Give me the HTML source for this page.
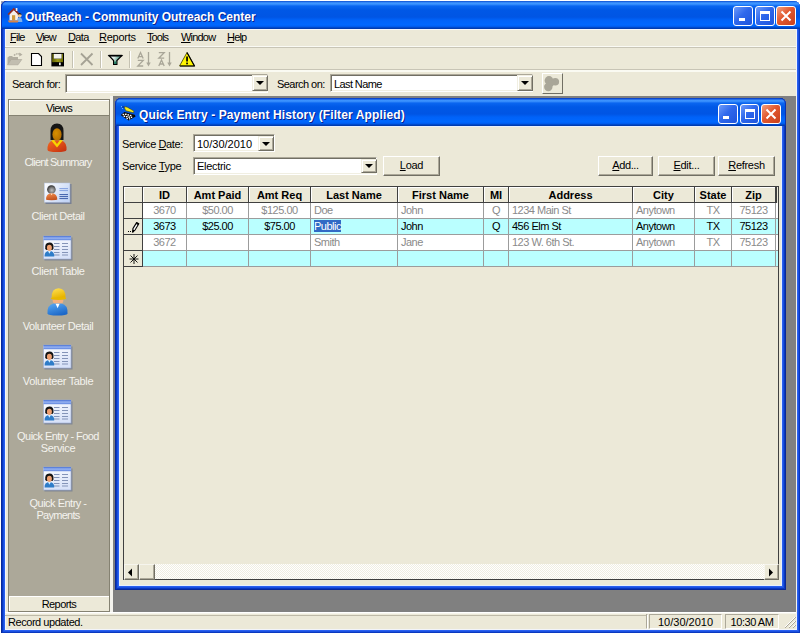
<!DOCTYPE html><html><head><meta charset="utf-8"><style>
*{margin:0;padding:0;box-sizing:border-box}
html,body{width:800px;height:633px;overflow:hidden;background:#fff;font-family:"Liberation Sans",sans-serif;font-size:11px;color:#000}
.a{position:absolute;white-space:nowrap}
.tbar{background:linear-gradient(#0846C8 0,#2A7AF0 1px,#3D95FF 2px,#3D95FF 3px,#0A66F0 5px,#0058E6 9px,#0055E4 16px,#0062F8 19px,#0068FF 24px,#0058E8 26px,#003CB0 27px,#003CB0 28px)}
.tbar2{background:linear-gradient(#0A3CC0 0,#0F50D8 1px,#3A8EFC 2px,#3D95FF 3px,#2A80F8 4px,#0A66F0 5px,#0058E6 9px,#0055E4 16px,#0062F8 19px,#0068FF 24px,#0058E8 26px,#003CB0 27px,#003CB0 28px)}
.ttl{color:#fff;font-weight:bold;font-size:12px;text-shadow:1px 1px 0 #0A1E8C}
.cbtn{border:1px solid #fff;border-radius:3px;background:linear-gradient(135deg,#6D9BFA,#2F68EC 45%,#1F55DC)}
.xbtn{background:linear-gradient(135deg,#F2A07F,#E2582F 45%,#C9401C)}
.u{text-decoration:underline}
.sunk{background:#fff;border-top:1px solid #ACA899;border-left:1px solid #ACA899;border-right:1px solid #fff;border-bottom:1px solid #fff;box-shadow:inset 1px 1px 0 #716F64, inset -1px -1px 0 #F1EFE2}
.ddb{background:#ECE9D8;border-top:1px solid #F1EFE2;border-left:1px solid #F1EFE2;border-right:1px solid #716F64;border-bottom:1px solid #716F64;box-shadow:inset 1px 1px 0 #fff, inset -1px -1px 0 #ACA899}
.ddb:after{content:"";position:absolute;left:50%;top:50%;margin-left:-4px;margin-top:-2px;border-left:4px solid transparent;border-right:4px solid transparent;border-top:4px solid #000}
.btn{background:#ECE9D8;border-top:1px solid #fff;border-left:1px solid #fff;border-right:1px solid #716F64;border-bottom:1px solid #716F64;box-shadow:inset -1px -1px 0 #ACA899;text-align:center}
.sbtn{background:#ECE9D8;border-top:1px solid #F6F5EE;border-left:1px solid #F6F5EE;border-right:1px solid #716F64;border-bottom:1px solid #716F64;box-shadow:inset -1px -1px 0 #ACA899}
.pbtn{background:#ECE9D8;border-bottom:1px solid #858272;box-shadow:inset 1px 1px 0 #fff;text-align:center}
.pbtn2{background:#ECE9D8;box-shadow:inset 1px 1px 0 #fff;text-align:center}
.vlab{color:#F4F3EE;text-align:center;line-height:12px}
.hc{background:#ECE9D8;border-right:1px solid #404040;border-bottom:1px solid #404040;box-shadow:inset 1px 1px 0 #fff;font-weight:bold;text-align:center;line-height:17px}
.dc{border-right:1px solid #9C9C9C;border-bottom:1px solid #9C9C9C;line-height:15px;overflow:hidden;padding-left:3px}
.rh{background:#ECE9D8;border-right:1px solid #404040;border-bottom:1px solid #404040}
.g{color:#8A8A8A}
.spanel{border-top:1px solid #ACA899;border-left:1px solid #ACA899;border-right:1px solid #fff;border-bottom:1px solid #fff;line-height:14px;text-align:center}
</style></head><body>
<div class="a" style="left:0;top:0;width:800px;height:633px;background:#fff"></div>
<div class="a" style="left:1px;top:1px;width:5px;height:5px;background:#A4A8B8"></div>
<div class="a" style="left:1px;top:1px;width:799px;height:632px;background:#2A60F0;border-radius:6px 6px 0 0;box-shadow:inset 1px 0 0 #08289A, inset -1px -1px 0 #0A38C0, inset 2px 0 0 #0A38C0, inset -2px -2px 0 #1A50E0, inset 3px 0 0 #1A50E0"></div>
<div class="a tbar" style="left:1px;top:1px;width:799px;height:28px;border-radius:6px 6px 0 0;box-shadow:inset 1px 0 0 #0A30B0"></div>
<svg class="a" style="left:7px;top:7px" width="16" height="16" viewBox="0 0 16 16">
<path d="M2.5 7 L2.5 13.5 L11 13.5 L11 7 L6.8 3Z" fill="#F6F0EA"/>
<path d="M1.2 7.6 L6.8 2 L12.2 7.4" fill="none" stroke="#9C2C1A" stroke-width="1.6"/>
<rect x="8.8" y="1" width="1.6" height="3" fill="#F0F0F0"/>
<rect x="5" y="8.2" width="3.2" height="5.3" fill="#D09A3A"/>
<path d="M9.8 15 Q10 10.6 12.6 10.6 Q15.2 10.6 15.4 15Z" fill="#7EB0EC"/>
<circle cx="12.6" cy="8.6" r="2" fill="#EEC694"/>
<path d="M10.6 8 Q11 6 12.6 6 Q14.4 6 14.6 8 Q13.6 7.2 12.6 7.2 Q11.6 7.2 10.6 8Z" fill="#1A1410"/>
<path d="M0.8 13.4 L11.5 13.4 L10.8 15.4 L2 15.4Z" fill="#D8844A"/>
</svg>
<div class="a ttl" style="left:25px;top:10px;letter-spacing:0px">OutReach - Community Outreach Center</div>
<div class="a cbtn" style="left:733px;top:6px;width:20px;height:20px"><div class="a" style="left:5px;top:11px;width:6px;height:3px;background:#fff"></div></div>
<div class="a cbtn" style="left:755px;top:6px;width:20px;height:20px"><div class="a" style="left:4px;top:4px;width:10px;height:10px;border:1px solid #fff;border-top-width:3px"></div></div>
<div class="a cbtn xbtn" style="left:776px;top:6px;width:20px;height:20px"><svg class="a" style="left:3px;top:3px" width="12" height="12"><path d="M1.5 1.5L10.5 10.5M10.5 1.5L1.5 10.5" stroke="#fff" stroke-width="2"/></svg></div>
<div class="a" style="left:5px;top:29px;width:792px;height:601px;background:#ECE9D8;border:1px solid #F2F4FA;border-top-color:#F6F8FC"></div>
<div class="a" style="left:10px;top:31px;line-height:13px;letter-spacing:-0.75px"><span class="u">F</span>ile</div>
<div class="a" style="left:36px;top:31px;line-height:13px;letter-spacing:-1.0px"><span class="u">V</span>iew</div>
<div class="a" style="left:68px;top:31px;line-height:13px;letter-spacing:-0.65px"><span class="u">D</span>ata</div>
<div class="a" style="left:99px;top:31px;line-height:13px;letter-spacing:-0.25px"><span class="u">R</span>eports</div>
<div class="a" style="left:147px;top:31px;line-height:13px;letter-spacing:-0.9px"><span class="u">T</span>ools</div>
<div class="a" style="left:181px;top:31px;line-height:13px;letter-spacing:-0.8px"><span class="u">W</span>indow</div>
<div class="a" style="left:227px;top:31px;line-height:13px;letter-spacing:-0.8px"><span class="u">H</span>elp</div>
<div class="a" style="left:5px;top:46px;width:791px;height:1px;background:#FAFAF4"></div>
<div class="a" style="left:5px;top:47px;width:791px;height:1px;background:#C8C5B6"></div>
<svg class="a" style="left:5px;top:48px" width="200" height="22" viewBox="0 0 200 22">
<!-- open folder disabled -->
<path d="M2.5 16.5 L2.5 9.5 L4.5 8 L7 8 L8 9 L13 9 L13 12 Z" fill="#B2AEA0"/>
<path d="M2.5 16.8 L6.2 11.5 L16.8 11.5 L13 16.8Z" fill="#C2BEB0" stroke="#A9A597" stroke-width="0.6"/>
<path d="M9 7.5 Q12 4.5 15.5 6.5" fill="none" stroke="#B2AEA0" stroke-width="1.4" stroke-dasharray="1.6 0.8"/>
<path d="M14.5 4.5 L17.5 6.8 L14.2 8.6Z" fill="#B2AEA0"/>
<!-- new doc -->
<path d="M26.5 5.5 L33.5 5.5 L36.5 8.5 L36.5 17.5 L26.5 17.5 Z" fill="#fff" stroke="#000" stroke-width="1.1"/>
<!-- save -->
<defs><linearGradient id="olv" x1="0" y1="0" x2="1" y2="0"><stop offset="0" stop-color="#5E5E00"/><stop offset="0.5" stop-color="#9A9A1A"/><stop offset="1" stop-color="#6E6E00"/></linearGradient></defs>
<rect x="46.4" y="4.9" width="12.6" height="13.5" fill="#000"/>
<rect x="47.4" y="5.9" width="1.3" height="8.2" fill="#7A7A08"/>
<rect x="56.7" y="5.9" width="1.3" height="8.2" fill="#7A7A08"/>
<rect x="48.8" y="5.9" width="7.8" height="4.8" fill="#F2F2EA"/>
<rect x="47.4" y="10.9" width="10.6" height="3.2" fill="url(#olv)"/>
<rect x="54" y="14.6" width="1.7" height="2.6" fill="#F0F0F0"/>
<!-- separator -->
<rect x="67" y="3" width="1" height="17" fill="#C5C2B2"/><rect x="68" y="3" width="1" height="17" fill="#fff"/>
<!-- delete X disabled -->
<path d="M76 5.5 L87.5 17 M87.5 5.5 L76 17" stroke="#A5A295" stroke-width="1.8"/>
<!-- separator -->
<rect x="95" y="3" width="1" height="17" fill="#C5C2B2"/><rect x="96" y="3" width="1" height="17" fill="#fff"/>
<!-- filter -->
<defs><linearGradient id="flt" x1="0" y1="0" x2="1" y2="0.3"><stop offset="0" stop-color="#FFFFFF"/><stop offset="0.45" stop-color="#D8E8E4"/><stop offset="1" stop-color="#107A5A"/></linearGradient></defs>
<path d="M104 7.6 L116.8 7.6 L111.9 12.6 L111.9 16.4 L108.6 16.4 L108.6 12.6 Z" fill="url(#flt)" stroke="#000" stroke-width="1.2" stroke-linejoin="miter"/>
<rect x="103.6" y="6.8" width="13.6" height="1.6" fill="#000"/>
<rect x="109.2" y="13.5" width="2.2" height="2.4" fill="#1E7A5E"/>
<!-- separator -->
<rect x="124" y="3" width="1" height="17" fill="#C5C2B2"/><rect x="125" y="3" width="1" height="17" fill="#fff"/>
<!-- sort az disabled -->
<g stroke="#A9A698" stroke-width="1.3" fill="none" stroke-linejoin="miter">
<path d="M132.8 10.6 L135.5 4.6 L138.2 10.6 M133.8 8.6 H137.2"/>
<path d="M132.8 12.4 H138.2 L132.8 18 H138.2"/>
<path d="M143.5 4 V16"/>
<path d="M153.8 4.6 H159.2 L153.8 10.2 H159.2"/>
<path d="M153.8 18 L156.5 12 L159.2 18 M154.8 16 H158.2"/>
<path d="M164.5 4 V16"/>
</g>
<path d="M141.3 14.5 L143.5 18.5 L145.7 14.5Z" fill="#A9A698"/>
<path d="M162.3 14.5 L164.5 18.5 L166.7 14.5Z" fill="#A9A698"/>
<!-- warning -->
<path d="M182 4.5 L189.5 18 L174.5 18 Z" fill="#FFF500" stroke="#3A3A00" stroke-width="0.8" stroke-linejoin="round"/>
<path d="M182 4.5 L189.5 18 L175 18" fill="none" stroke="#000" stroke-width="1.2" stroke-linejoin="round"/>
<rect x="181.2" y="8.5" width="1.7" height="5" fill="#000"/><rect x="181.2" y="14.6" width="1.7" height="1.7" fill="#000"/>
</svg>
<div class="a" style="left:5px;top:69px;width:791px;height:1px;background:#C8C5B6"></div>
<div class="a" style="left:5px;top:70px;width:791px;height:2px;background:#FAFAF2"></div>
<div class="a" style="left:12px;top:78px;line-height:12px;letter-spacing:-0.5px">Search for:</div>
<div class="a sunk" style="left:65px;top:74px;width:203px;height:19px"></div>
<div class="a ddb" style="left:252px;top:75px;width:16px;height:16px"></div>
<div class="a" style="left:277px;top:78px;line-height:12px;letter-spacing:-0.55px">Search on:</div>
<div class="a sunk" style="left:330px;top:74px;width:203px;height:18px"><div class="a" style="left:3px;top:3px;line-height:12px;letter-spacing:-0.6px">Last Name</div></div>
<div class="a ddb" style="left:517px;top:75px;width:16px;height:16px"></div>
<div class="a" style="left:542px;top:73px;width:21px;height:21px;border-top:1px solid #fff;border-left:1px solid #fff;border-right:1px solid #716F64;border-bottom:1px solid #716F64"></div>
<svg class="a" style="left:540px;top:72px" width="24" height="24" viewBox="540 72 24 24"><g fill="#A9A698"><circle cx="549" cy="80.5" r="4.4"/><circle cx="555.3" cy="81.8" r="3.8"/><circle cx="548.3" cy="87" r="4.2"/><path d="M548 80 L556 81 L553 86 L549 88Z"/></g></svg>
<div class="a" style="left:113px;top:96px;width:683px;height:516px;background:#808080"></div>
<div class="a" style="left:110px;top:96px;width:3px;height:517px;background:#F4F3EE"></div>
<div class="a" style="left:796px;top:96px;width:1px;height:517px;background:#F4F3EE"></div>
<div class="a" style="left:8px;top:99px;width:102px;height:513px;background:#ACA899;border:1px solid #858272"></div>
<div class="a pbtn" style="left:9px;top:100px;width:100px;height:16px;line-height:17px;letter-spacing:-0.6px">Views</div>
<div class="a pbtn2" style="left:9px;top:596px;width:100px;height:15px;line-height:17px;letter-spacing:-0.55px">Reports</div>
<div class="a vlab" style="left:8px;width:100px;top:156px;letter-spacing:-0.8px">Client Summary</div>
<div class="a vlab" style="left:8px;width:100px;top:210px;letter-spacing:-0.5px">Client Detail</div>
<div class="a vlab" style="left:8px;width:100px;top:265px;letter-spacing:-0.35px">Client Table</div>
<div class="a vlab" style="left:8px;width:100px;top:320px;letter-spacing:-0.45px">Volunteer Detail</div>
<div class="a vlab" style="left:8px;width:100px;top:375px;letter-spacing:-0.35px">Volunteer Table</div>
<div class="a vlab" style="left:8px;width:100px;top:430px;letter-spacing:-0.55px">Quick Entry - Food</div>
<div class="a vlab" style="left:8px;width:100px;top:442px;letter-spacing:-0.3px">Service</div>
<div class="a vlab" style="left:8px;width:100px;top:497px;letter-spacing:-0.5px">Quick Entry -</div>
<div class="a vlab" style="left:8px;width:100px;top:509px;letter-spacing:-0.75px">Payments</div>
<svg class="a" style="left:46px;top:122px" width="22" height="31" viewBox="0 0 22 31">
<defs><linearGradient id="csb" x1="0" y1="0" x2="1" y2="1"><stop offset="0" stop-color="#F46A22"/><stop offset="1" stop-color="#C22E10"/></linearGradient>
<radialGradient id="csf" cx="0.4" cy="0.4" r="0.7"><stop offset="0" stop-color="#D89000"/><stop offset="1" stop-color="#B06A00"/></radialGradient></defs>
<path d="M4.5 18 L4.5 9 Q4.5 1.5 11 1.5 Q17.5 1.5 17.5 9 L17.5 18 Z" fill="#151515"/>
<ellipse cx="11" cy="12.5" rx="4.6" ry="6.3" fill="url(#csf)"/>
<path d="M1.5 28 Q1 20.5 6.5 18.5 L15.5 18.5 Q21 20.5 20.5 28 Q20 30 11 30 Q2 30 1.5 28Z" fill="url(#csb)"/>
<path d="M5.2 18.6 L11 25.5 L16.8 18.6 L14.2 17.8 L11 22 L7.8 17.8Z" fill="#F6D400"/>
</svg>
<svg class="a" style="left:44px;top:182px" width="28" height="22" viewBox="0 0 28 22">
<defs><linearGradient id="cd" x1="0" y1="0" x2="1" y2="0.6"><stop offset="0" stop-color="#FFFFFF"/><stop offset="1" stop-color="#C4D6F6"/></linearGradient>
<radialGradient id="cdh" cx="0.55" cy="0.6" r="0.6"><stop offset="0" stop-color="#C0C0C0"/><stop offset="0.5" stop-color="#808080"/><stop offset="1" stop-color="#2A2A2A"/></radialGradient>
<linearGradient id="cdb" x1="0" y1="0" x2="0.3" y2="1"><stop offset="0" stop-color="#F49050"/><stop offset="1" stop-color="#C45420"/></linearGradient></defs>
<rect x="1.5" y="2" width="26" height="20" fill="#4C5C8C" opacity="0.55"/>
<rect x="0.3" y="1" width="25.6" height="19.2" fill="url(#cd)" stroke="#B4C4E4" stroke-width="0.5"/>
<circle cx="7.4" cy="7.5" r="4.3" fill="url(#cdh)"/>
<path d="M2 17.6 Q1.8 11.6 7.6 11.3 Q13.4 11.6 13.3 17.6 Q13 18.2 7.6 18.2 Q2.3 18.2 2 17.6Z" fill="url(#cdb)"/>
<path d="M6.5 11.4 L7.6 13.2 L8.7 11.4Z" fill="#FFE6C8"/>
<rect x="15.4" y="6" width="8.6" height="1.1" fill="#8AA6E2"/><rect x="15.4" y="8" width="8.6" height="1.1" fill="#8AA6E2"/>
<rect x="15.4" y="12" width="8.6" height="1.1" fill="#4A68B0"/><rect x="15.4" y="14" width="8.6" height="1.1" fill="#4A68B0"/><rect x="15.4" y="16" width="8.6" height="1.1" fill="#4A68B0"/>
</svg>
<svg class="a" style="left:43px;top:235px" width="30" height="26" viewBox="0 0 30 26">
<defs><linearGradient id="ti43_235b" x1="0" y1="0" x2="0.3" y2="1"><stop offset="0" stop-color="#FFFFFF"/><stop offset="1" stop-color="#D8E2F8"/></linearGradient>
<linearGradient id="ti43_235t" x1="0" y1="0" x2="0" y2="1"><stop offset="0" stop-color="#4A72D4"/><stop offset="0.5" stop-color="#98B4F2"/><stop offset="1" stop-color="#5C82DC"/></linearGradient></defs>
<rect x="1.5" y="2.5" width="28" height="23" fill="#56668E" opacity="0.5"/>
<rect x="0.5" y="1" width="27.5" height="23" fill="url(#ti43_235b)" stroke="#9AAAD2" stroke-width="0.6"/>
<rect x="0.5" y="1" width="27.5" height="4.2" fill="url(#ti43_235t)"/>
<g fill="#8494B8"><rect x="11" y="8" width="5.5" height="1"/><rect x="19" y="8" width="6" height="1"/>
<rect x="11" y="11" width="5.5" height="1"/><rect x="19" y="11" width="6" height="1"/>
<rect x="11" y="14" width="5.5" height="1"/><rect x="19" y="14" width="6" height="1"/>
<rect x="11" y="17" width="5.5" height="1"/><rect x="19" y="17" width="6" height="1"/>
<rect x="11" y="19.5" width="5.5" height="1"/><rect x="19" y="19.5" width="6" height="1"/></g>
<path d="M2.2 14 Q1.6 7.6 6.4 7.6 Q11 7.6 10.5 13.5 L9.5 15 L3.5 15Z" fill="#141414"/>
<ellipse cx="6.4" cy="12.8" rx="2.5" ry="3.1" fill="#F0A070"/>
<path d="M1.6 21.5 Q1.2 16.2 6.4 16 Q11.6 16.2 11.2 21.5Z" fill="#2E7CC8"/>
<path d="M5 16.1 L6.4 18.8 L7.8 16.1Z" fill="#D8F0FF"/>
</svg>
<svg class="a" style="left:46px;top:287px" width="24" height="30" viewBox="0 0 24 30">
<defs><linearGradient id="vdh" x1="0" y1="0" x2="0.4" y2="1"><stop offset="0" stop-color="#FFE258"/><stop offset="1" stop-color="#E8B400"/></linearGradient>
<linearGradient id="vdb" x1="0" y1="0" x2="0.5" y2="1"><stop offset="0" stop-color="#5AAAF4"/><stop offset="1" stop-color="#1C68C8"/></linearGradient></defs>
<path d="M6.5 12.5 L17.5 12.5 Q17.3 17.6 12 18 Q6.7 17.6 6.5 12.5Z" fill="#F4B07E"/>
<path d="M1.5 26.5 Q1 18 7.5 16.6 L15.5 16.6 Q22 18 21.5 26.5 Q21 28.6 11.5 28.6 Q2 28.6 1.5 26.5Z" fill="url(#vdb)"/>
<path d="M9.6 16.8 L11.6 21.2 L13.6 16.8Z" fill="#fff"/>
<path d="M5.6 11.5 Q5.2 1.2 12.6 1.2 Q20 1.2 19.6 11.5 Z" fill="url(#vdh)"/>
<ellipse cx="12.5" cy="11.6" rx="7.8" ry="1.4" fill="#E8B800"/>
</svg>
<svg class="a" style="left:43px;top:344px" width="30" height="26" viewBox="0 0 30 26">
<defs><linearGradient id="ti43_344b" x1="0" y1="0" x2="0.3" y2="1"><stop offset="0" stop-color="#FFFFFF"/><stop offset="1" stop-color="#D8E2F8"/></linearGradient>
<linearGradient id="ti43_344t" x1="0" y1="0" x2="0" y2="1"><stop offset="0" stop-color="#4A72D4"/><stop offset="0.5" stop-color="#98B4F2"/><stop offset="1" stop-color="#5C82DC"/></linearGradient></defs>
<rect x="1.5" y="2.5" width="28" height="23" fill="#56668E" opacity="0.5"/>
<rect x="0.5" y="1" width="27.5" height="23" fill="url(#ti43_344b)" stroke="#9AAAD2" stroke-width="0.6"/>
<rect x="0.5" y="1" width="27.5" height="4.2" fill="url(#ti43_344t)"/>
<g fill="#8494B8"><rect x="11" y="8" width="5.5" height="1"/><rect x="19" y="8" width="6" height="1"/>
<rect x="11" y="11" width="5.5" height="1"/><rect x="19" y="11" width="6" height="1"/>
<rect x="11" y="14" width="5.5" height="1"/><rect x="19" y="14" width="6" height="1"/>
<rect x="11" y="17" width="5.5" height="1"/><rect x="19" y="17" width="6" height="1"/>
<rect x="11" y="19.5" width="5.5" height="1"/><rect x="19" y="19.5" width="6" height="1"/></g>
<path d="M2.2 14 Q1.6 7.6 6.4 7.6 Q11 7.6 10.5 13.5 L9.5 15 L3.5 15Z" fill="#141414"/>
<ellipse cx="6.4" cy="12.8" rx="2.5" ry="3.1" fill="#F0A070"/>
<path d="M1.6 21.5 Q1.2 16.2 6.4 16 Q11.6 16.2 11.2 21.5Z" fill="#2E7CC8"/>
<path d="M5 16.1 L6.4 18.8 L7.8 16.1Z" fill="#D8F0FF"/>
</svg>
<svg class="a" style="left:43px;top:399px" width="30" height="26" viewBox="0 0 30 26">
<defs><linearGradient id="ti43_399b" x1="0" y1="0" x2="0.3" y2="1"><stop offset="0" stop-color="#FFFFFF"/><stop offset="1" stop-color="#D8E2F8"/></linearGradient>
<linearGradient id="ti43_399t" x1="0" y1="0" x2="0" y2="1"><stop offset="0" stop-color="#4A72D4"/><stop offset="0.5" stop-color="#98B4F2"/><stop offset="1" stop-color="#5C82DC"/></linearGradient></defs>
<rect x="1.5" y="2.5" width="28" height="23" fill="#56668E" opacity="0.5"/>
<rect x="0.5" y="1" width="27.5" height="23" fill="url(#ti43_399b)" stroke="#9AAAD2" stroke-width="0.6"/>
<rect x="0.5" y="1" width="27.5" height="4.2" fill="url(#ti43_399t)"/>
<g fill="#8494B8"><rect x="11" y="8" width="5.5" height="1"/><rect x="19" y="8" width="6" height="1"/>
<rect x="11" y="11" width="5.5" height="1"/><rect x="19" y="11" width="6" height="1"/>
<rect x="11" y="14" width="5.5" height="1"/><rect x="19" y="14" width="6" height="1"/>
<rect x="11" y="17" width="5.5" height="1"/><rect x="19" y="17" width="6" height="1"/>
<rect x="11" y="19.5" width="5.5" height="1"/><rect x="19" y="19.5" width="6" height="1"/></g>
<path d="M2.2 14 Q1.6 7.6 6.4 7.6 Q11 7.6 10.5 13.5 L9.5 15 L3.5 15Z" fill="#141414"/>
<ellipse cx="6.4" cy="12.8" rx="2.5" ry="3.1" fill="#F0A070"/>
<path d="M1.6 21.5 Q1.2 16.2 6.4 16 Q11.6 16.2 11.2 21.5Z" fill="#2E7CC8"/>
<path d="M5 16.1 L6.4 18.8 L7.8 16.1Z" fill="#D8F0FF"/>
</svg>
<svg class="a" style="left:43px;top:466px" width="30" height="26" viewBox="0 0 30 26">
<defs><linearGradient id="ti43_466b" x1="0" y1="0" x2="0.3" y2="1"><stop offset="0" stop-color="#FFFFFF"/><stop offset="1" stop-color="#D8E2F8"/></linearGradient>
<linearGradient id="ti43_466t" x1="0" y1="0" x2="0" y2="1"><stop offset="0" stop-color="#4A72D4"/><stop offset="0.5" stop-color="#98B4F2"/><stop offset="1" stop-color="#5C82DC"/></linearGradient></defs>
<rect x="1.5" y="2.5" width="28" height="23" fill="#56668E" opacity="0.5"/>
<rect x="0.5" y="1" width="27.5" height="23" fill="url(#ti43_466b)" stroke="#9AAAD2" stroke-width="0.6"/>
<rect x="0.5" y="1" width="27.5" height="4.2" fill="url(#ti43_466t)"/>
<g fill="#8494B8"><rect x="11" y="8" width="5.5" height="1"/><rect x="19" y="8" width="6" height="1"/>
<rect x="11" y="11" width="5.5" height="1"/><rect x="19" y="11" width="6" height="1"/>
<rect x="11" y="14" width="5.5" height="1"/><rect x="19" y="14" width="6" height="1"/>
<rect x="11" y="17" width="5.5" height="1"/><rect x="19" y="17" width="6" height="1"/>
<rect x="11" y="19.5" width="5.5" height="1"/><rect x="19" y="19.5" width="6" height="1"/></g>
<path d="M2.2 14 Q1.6 7.6 6.4 7.6 Q11 7.6 10.5 13.5 L9.5 15 L3.5 15Z" fill="#141414"/>
<ellipse cx="6.4" cy="12.8" rx="2.5" ry="3.1" fill="#F0A070"/>
<path d="M1.6 21.5 Q1.2 16.2 6.4 16 Q11.6 16.2 11.2 21.5Z" fill="#2E7CC8"/>
<path d="M5 16.1 L6.4 18.8 L7.8 16.1Z" fill="#D8F0FF"/>
</svg>
<div class="a" style="left:115px;top:98px;width:671px;height:492px;background:#2A60F0;border-radius:6px 6px 0 0;box-shadow:inset 1px -1px 0 #08289A, inset -1px 0 0 #08289A, inset 2px -2px 0 #0A38C0, inset -2px 0 0 #0A38C0, inset 3px -3px 0 #1A50E0, inset -3px 0 0 #1A50E0"></div>
<div class="a tbar2" style="left:115px;top:98px;width:671px;height:28px;border-radius:6px 6px 0 0;box-shadow:inset 1px 0 0 #0A30B0, inset -1px 0 0 #0A30B0"></div>
<svg class="a" style="left:120px;top:104px" width="17" height="18" viewBox="0 0 17 18">
<path d="M4.5 2.6 L7.3 3.2 L13.9 7.1 L13.5 8.8 L5.7 6.7 L4.7 4.2Z" fill="#F2EC20" stroke="#303000" stroke-width="0.5"/>
<path d="M1.2 10.4 L4.5 7.9 L14.75 10.8 L15.6 12.5 L8.6 16.6 L1.2 11.6Z" fill="#0A0A0A"/>
<g fill="#FFFFFF"><rect x="2.6" y="9.8" width="1.6" height="1.4"/><rect x="5" y="9.6" width="1.6" height="1.4"/><rect x="7.4" y="10.2" width="1.6" height="1.4"/><rect x="9.8" y="10.8" width="1.6" height="1.4"/>
<rect x="3.6" y="11.6" width="1.6" height="1.4"/><rect x="6" y="12" width="1.6" height="1.4"/><rect x="8.4" y="12.4" width="1.6" height="1.4"/><rect x="10.8" y="12.6" width="1.4" height="1.4"/><rect x="6.5" y="14" width="1.4" height="1.2"/><rect x="9" y="14.2" width="1.2" height="1.2"/></g>
<rect x="1" y="2" width="1.2" height="1.2" fill="#60B0FF"/><rect x="2.4" y="2.4" width="1.2" height="1.2" fill="#001060"/><rect x="2" y="4" width="1" height="1" fill="#60B0FF"/>
</svg>
<div class="a ttl" style="left:139px;top:108px;letter-spacing:0.12px">Quick Entry - Payment History (Filter Applied)</div>
<div class="a cbtn" style="left:718px;top:104px;width:20px;height:20px"><div class="a" style="left:4px;top:11px;width:6px;height:3px;background:#fff"></div></div>
<div class="a cbtn" style="left:740px;top:104px;width:19px;height:20px"><div class="a" style="left:4px;top:4px;width:10px;height:10px;border:1px solid #fff;border-top-width:3px"></div></div>
<div class="a cbtn xbtn" style="left:761px;top:104px;width:20px;height:20px"><svg class="a" style="left:3px;top:3px" width="12" height="12"><path d="M1.5 1.5L10.5 10.5M10.5 1.5L1.5 10.5" stroke="#fff" stroke-width="2"/></svg></div>
<div class="a" style="left:119px;top:126px;width:663px;height:460px;background:#ECE9D8;border:1px solid #E8F0FC"></div>
<div class="a" style="left:122px;top:138px;line-height:12px;letter-spacing:-0.4px">Service <span class="u">D</span>ate:</div>
<div class="a sunk" style="left:193px;top:134px;width:82px;height:18px"><div class="a" style="left:3px;top:3px;line-height:12px;letter-spacing:0px">10/30/2010</div></div>
<div class="a ddb" style="left:258px;top:136px;width:16px;height:15px"></div>
<div class="a" style="left:122px;top:160px;line-height:12px;letter-spacing:-0.35px">Service <span class="u">T</span>ype</div>
<div class="a sunk" style="left:193px;top:157px;width:184px;height:18px"><div class="a" style="left:3px;top:2px;line-height:12px;letter-spacing:-0.3px">Electric</div></div>
<div class="a ddb" style="left:361px;top:159px;width:16px;height:14px"></div>
<div class="a btn" style="left:383px;top:156px;width:57px;height:20px;line-height:17px;letter-spacing:-0.3px"><span class="u">L</span>oad</div>
<div class="a btn" style="left:598px;top:156px;width:55px;height:20px;line-height:17px;letter-spacing:-0.4px"><span class="u">A</span>dd...</div>
<div class="a btn" style="left:658px;top:156px;width:57px;height:20px;line-height:17px;letter-spacing:-0.3px"><span class="u">E</span>dit...</div>
<div class="a btn" style="left:718px;top:156px;width:57px;height:20px;line-height:17px;letter-spacing:-0.3px"><span class="u">R</span>efresh</div>
<div class="a" style="left:123px;top:186px;width:656px;height:394px;background:#ECE9D8;border:1px solid #404040"></div>
<div class="a hc" style="left:124px;top:187px;width:19px;height:16px;letter-spacing:0px"></div>
<div class="a hc" style="left:143px;top:187px;width:44px;height:16px;letter-spacing:0px">ID</div>
<div class="a hc" style="left:187px;top:187px;width:62px;height:16px;letter-spacing:0px">Amt Paid</div>
<div class="a hc" style="left:249px;top:187px;width:62px;height:16px;letter-spacing:0px">Amt Req</div>
<div class="a hc" style="left:311px;top:187px;width:87px;height:16px;letter-spacing:0px">Last Name</div>
<div class="a hc" style="left:398px;top:187px;width:86px;height:16px;letter-spacing:0px">First Name</div>
<div class="a hc" style="left:484px;top:187px;width:25px;height:16px;letter-spacing:0px">MI</div>
<div class="a hc" style="left:509px;top:187px;width:124px;height:16px;letter-spacing:0px">Address</div>
<div class="a hc" style="left:633px;top:187px;width:62px;height:16px;letter-spacing:0px">City</div>
<div class="a hc" style="left:695px;top:187px;width:37px;height:16px;letter-spacing:0px">State</div>
<div class="a hc" style="left:732px;top:187px;width:44px;height:16px;letter-spacing:0px">Zip</div>
<div class="a hc" style="left:776px;top:187px;width:1px;height:16px;letter-spacing:0px"></div>
<div class="a rh" style="left:124px;top:203px;width:19px;height:16px"></div>
<div class="a dc g" style="left:143px;top:203px;width:44px;height:16px;background:#FFFFFF;text-align:center;padding-left:0;letter-spacing:-0.5px">3670</div>
<div class="a dc g" style="left:187px;top:203px;width:62px;height:16px;background:#FFFFFF;text-align:center;padding-left:0;letter-spacing:-0.5px">$50.00</div>
<div class="a dc g" style="left:249px;top:203px;width:62px;height:16px;background:#FFFFFF;text-align:center;padding-left:0;letter-spacing:-0.5px">$125.00</div>
<div class="a dc g" style="left:311px;top:203px;width:87px;height:16px;background:#FFFFFF;letter-spacing:-0.5px">Doe</div>
<div class="a dc g" style="left:398px;top:203px;width:86px;height:16px;background:#FFFFFF;letter-spacing:-0.5px">John</div>
<div class="a dc g" style="left:484px;top:203px;width:25px;height:16px;background:#FFFFFF;text-align:center;padding-left:0;letter-spacing:-0.5px">Q</div>
<div class="a dc g" style="left:509px;top:203px;width:124px;height:16px;background:#FFFFFF;letter-spacing:-0.5px">1234 Main St</div>
<div class="a dc g" style="left:633px;top:203px;width:62px;height:16px;background:#FFFFFF;letter-spacing:-0.5px">Anytown</div>
<div class="a dc g" style="left:695px;top:203px;width:37px;height:16px;background:#FFFFFF;text-align:center;padding-left:0;letter-spacing:-0.5px">TX</div>
<div class="a dc g" style="left:732px;top:203px;width:44px;height:16px;background:#FFFFFF;text-align:center;padding-left:0;letter-spacing:-0.5px">75123</div>
<div class="a dc" style="left:776px;top:203px;width:2px;height:16px;background:#FFFFFF;border-right:0;padding:0"></div>
<div class="a rh" style="left:124px;top:219px;width:19px;height:16px"></div>
<div class="a dc " style="left:143px;top:219px;width:44px;height:16px;background:#BAFFFF;text-align:center;padding-left:0;letter-spacing:-0.5px">3673</div>
<div class="a dc " style="left:187px;top:219px;width:62px;height:16px;background:#BAFFFF;text-align:center;padding-left:0;letter-spacing:-0.5px">$25.00</div>
<div class="a dc " style="left:249px;top:219px;width:62px;height:16px;background:#BAFFFF;text-align:center;padding-left:0;letter-spacing:-0.5px">$75.00</div>
<div class="a dc " style="left:311px;top:219px;width:87px;height:16px;background:#BAFFFF;letter-spacing:-0.5px"><span style="background:#316AC5;color:#fff">Public</span></div>
<div class="a dc " style="left:398px;top:219px;width:86px;height:16px;background:#BAFFFF;letter-spacing:-0.5px">John</div>
<div class="a dc " style="left:484px;top:219px;width:25px;height:16px;background:#BAFFFF;text-align:center;padding-left:0;letter-spacing:-0.5px">Q</div>
<div class="a dc " style="left:509px;top:219px;width:124px;height:16px;background:#BAFFFF;letter-spacing:-0.5px">456 Elm St</div>
<div class="a dc " style="left:633px;top:219px;width:62px;height:16px;background:#BAFFFF;letter-spacing:-0.5px">Anytown</div>
<div class="a dc " style="left:695px;top:219px;width:37px;height:16px;background:#BAFFFF;text-align:center;padding-left:0;letter-spacing:-0.5px">TX</div>
<div class="a dc " style="left:732px;top:219px;width:44px;height:16px;background:#BAFFFF;text-align:center;padding-left:0;letter-spacing:-0.5px">75123</div>
<div class="a dc" style="left:776px;top:219px;width:2px;height:16px;background:#BAFFFF;border-right:0;padding:0"></div>
<div class="a rh" style="left:124px;top:235px;width:19px;height:16px"></div>
<div class="a dc g" style="left:143px;top:235px;width:44px;height:16px;background:#FFFFFF;text-align:center;padding-left:0;letter-spacing:-0.5px">3672</div>
<div class="a dc g" style="left:187px;top:235px;width:62px;height:16px;background:#FFFFFF;text-align:center;padding-left:0;letter-spacing:-0.5px"></div>
<div class="a dc g" style="left:249px;top:235px;width:62px;height:16px;background:#FFFFFF;text-align:center;padding-left:0;letter-spacing:-0.5px"></div>
<div class="a dc g" style="left:311px;top:235px;width:87px;height:16px;background:#FFFFFF;letter-spacing:-0.5px">Smith</div>
<div class="a dc g" style="left:398px;top:235px;width:86px;height:16px;background:#FFFFFF;letter-spacing:-0.5px">Jane</div>
<div class="a dc g" style="left:484px;top:235px;width:25px;height:16px;background:#FFFFFF;text-align:center;padding-left:0;letter-spacing:-0.5px"></div>
<div class="a dc g" style="left:509px;top:235px;width:124px;height:16px;background:#FFFFFF;letter-spacing:-0.5px">123 W. 6th St.</div>
<div class="a dc g" style="left:633px;top:235px;width:62px;height:16px;background:#FFFFFF;letter-spacing:-0.5px">Anytown</div>
<div class="a dc g" style="left:695px;top:235px;width:37px;height:16px;background:#FFFFFF;text-align:center;padding-left:0;letter-spacing:-0.5px">TX</div>
<div class="a dc g" style="left:732px;top:235px;width:44px;height:16px;background:#FFFFFF;text-align:center;padding-left:0;letter-spacing:-0.5px">75123</div>
<div class="a dc" style="left:776px;top:235px;width:2px;height:16px;background:#FFFFFF;border-right:0;padding:0"></div>
<div class="a rh" style="left:124px;top:251px;width:19px;height:16px"></div>
<div class="a dc " style="left:143px;top:251px;width:44px;height:16px;background:#BAFFFF;text-align:center;padding-left:0;letter-spacing:-0.5px"></div>
<div class="a dc " style="left:187px;top:251px;width:62px;height:16px;background:#BAFFFF;text-align:center;padding-left:0;letter-spacing:-0.5px"></div>
<div class="a dc " style="left:249px;top:251px;width:62px;height:16px;background:#BAFFFF;text-align:center;padding-left:0;letter-spacing:-0.5px"></div>
<div class="a dc " style="left:311px;top:251px;width:87px;height:16px;background:#BAFFFF;letter-spacing:-0.5px"></div>
<div class="a dc " style="left:398px;top:251px;width:86px;height:16px;background:#BAFFFF;letter-spacing:-0.5px"></div>
<div class="a dc " style="left:484px;top:251px;width:25px;height:16px;background:#BAFFFF;text-align:center;padding-left:0;letter-spacing:-0.5px"></div>
<div class="a dc " style="left:509px;top:251px;width:124px;height:16px;background:#BAFFFF;letter-spacing:-0.5px"></div>
<div class="a dc " style="left:633px;top:251px;width:62px;height:16px;background:#BAFFFF;letter-spacing:-0.5px"></div>
<div class="a dc " style="left:695px;top:251px;width:37px;height:16px;background:#BAFFFF;text-align:center;padding-left:0;letter-spacing:-0.5px"></div>
<div class="a dc " style="left:732px;top:251px;width:44px;height:16px;background:#BAFFFF;text-align:center;padding-left:0;letter-spacing:-0.5px"></div>
<div class="a dc" style="left:776px;top:251px;width:2px;height:16px;background:#BAFFFF;border-right:0;padding:0"></div>
<div class="a" style="left:778px;top:186px;width:1px;height:394px;background:#404040"></div>
<svg class="a" style="left:127px;top:221px" width="13" height="13" viewBox="0 0 13 13"><path d="M5.6 11.2 L5.9 7.6 L9.6 1.6 L11.8 2.8 L8.2 8.8 Z" fill="#fff" stroke="#000" stroke-width="1.1" stroke-linejoin="round"/><path d="M5.7 11 L7 9" stroke="#000" stroke-width="1.4"/><path d="M9.4 2.2 L11.4 3.4" stroke="#000" stroke-width="1.6"/><rect x="1" y="10" width="1" height="1" fill="#000"/><rect x="3" y="10" width="1" height="1" fill="#000"/></svg>
<svg class="a" style="left:129px;top:254px" width="10" height="10" viewBox="0 0 10 10"><path d="M5 0 V10 M0.5 5 H9.5 M1.5 1.5 L8.5 8.5 M8.5 1.5 L1.5 8.5" stroke="#000" stroke-width="0.9"/></svg>
<div class="a" style="left:124px;top:564px;width:654px;height:15px;background:repeating-conic-gradient(#FFFFFF 0% 25%, #F0EEE2 0% 50%) 0 0/2px 2px"></div>
<div class="a sbtn" style="left:124px;top:564px;width:15px;height:16px"></div>
<svg class="a" style="left:127px;top:568px" width="6" height="9"><path d="M5 0.5 L1 4.5 L5 8.5Z" fill="#000"/></svg>
<div class="a sbtn" style="left:139px;top:564px;width:16px;height:16px"></div>
<div class="a sbtn" style="left:764px;top:564px;width:15px;height:16px"></div>
<svg class="a" style="left:768px;top:568px" width="6" height="9"><path d="M1 0.5 L5 4.5 L1 8.5Z" fill="#000"/></svg>
<div class="a" style="left:5px;top:612px;width:791px;height:1px;background:#FFFFFF"></div>
<div class="a" style="left:5px;top:613px;width:791px;height:1px;background:#F6F5EC"></div>
<div class="a" style="left:5px;top:615px;width:641px;height:1px;background:#BEBAA8"></div>
<div class="a" style="left:8px;top:616px;line-height:13px;letter-spacing:-0.45px">Record updated.</div>
<div class="a spanel" style="left:646px;top:614px;width:1px;height:15px"></div>
<div class="a spanel" style="left:649px;top:614px;width:73px;height:15px;letter-spacing:0px">10/30/2010</div>
<div class="a spanel" style="left:725px;top:614px;width:54px;height:15px;letter-spacing:-0.45px">10:30 AM</div>
<svg class="a" style="left:783px;top:615px" width="14" height="14"><g stroke-width="1"><path d="M12 2L2 12M12 6L6 12M12 10L10 12" stroke="#fff"/><path d="M13 2L2 13M13 6L6 13M13 10L10 13" stroke="#ACA899"/></g></svg>
</body></html>
